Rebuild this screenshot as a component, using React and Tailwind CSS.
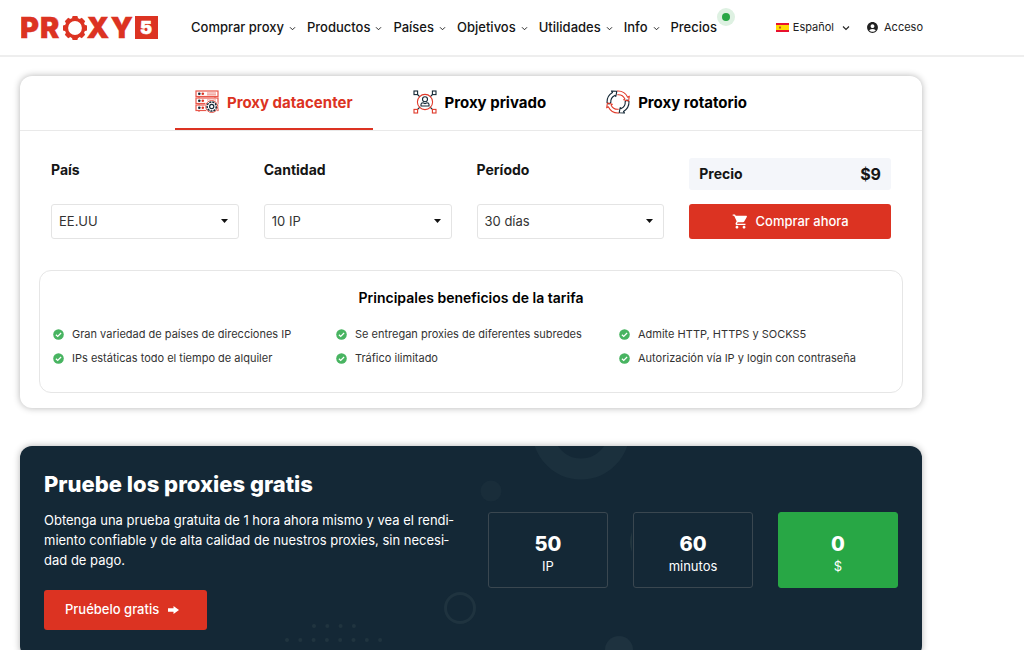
import React from "react";
import { MdAccountCircle, MdShoppingCart } from "react-icons/md";

const NAV = ["Comprar proxy", "Productos", "Países", "Objetivos", "Utilidades", "Info"];

const BENEFITS = [
  "Gran variedad de países de direcciones IP",
  "Se entregan proxies de diferentes subredes",
  "Admite HTTP, HTTPS y SOCKS5",
  "IPs estáticas todo el tiempo de alquiler",
  "Tráfico ilimitado",
  "Autorización vía IP y login con contraseña",
];

const FIELDS = [
  { id: "pais", label: "País", options: ["EE.UU", "Alemania", "Francia"] },
  { id: "cantidad", label: "Cantidad", options: ["10 IP", "50 IP", "100 IP"] },
  { id: "periodo", label: "Período", options: ["30 días", "60 días", "90 días"] },
];

function Logo() {
  const teeth = [0, 45, 90, 135, 180, 225, 270, 315];
  return (
    <svg width="138" height="38" viewBox="0 -6 138 38" role="img" aria-label="Proxy5">
      <g fill="#dc3322" stroke="#dc3322" strokeWidth="0.3" fontFamily="Inter, sans-serif" fontWeight="900" fontSize="29">
        <text x="-1" y="23.3">P</text>
        <text x="19" y="23.3">R</text>
        <text x="65.5" y="23.3">X</text>
        <text x="89.5" y="23.3">Y</text>
      </g>
      <circle cx="54" cy="13" r="8.6" fill="none" stroke="#dc3322" strokeWidth="3.4" />
      {teeth.map((a) => (
        <path key={a} d="M50.8 3.8 L51.6 1 H56.4 L57.2 3.8 Z" fill="#dc3322" transform={`rotate(${a} 54 13)`} />
      ))}
      <rect x="114" y="1" width="23" height="23" fill="#dc3322" />
      <text x="119" y="19" fill="#fff" stroke="#fff" strokeWidth="0.5" fontFamily="Inter, sans-serif" fontWeight="900" fontSize="18">5</text>
    </svg>
  );
}

function Chevron({ className }) {
  return (
    <svg className={className} viewBox="0 0 8 6" fill="none" stroke="currentColor" strokeWidth="1.1" aria-hidden="true">
      <path d="M1 1.5 L4 4.5 L7 1.5" />
    </svg>
  );
}

function SpainFlag() {
  return (
    <svg width="13" height="9" viewBox="0 0 13 9" aria-hidden="true">
      <rect width="13" height="9" fill="#e8112d" />
      <rect y="2" width="13" height="5" fill="#ffd900" />
      <rect x="3" y="3.5" width="2" height="2" fill="#c8501e" />
    </svg>
  );
}

function ServerIcon() {
  return (
    <svg width="24" height="24" viewBox="0 0 24 24" fill="none" aria-hidden="true">
      {[1, 8, 15].map((y) => (
        <g key={y}>
          <rect x="1" y={y} width="22" height="5.5" stroke="#e8564a" strokeWidth="1.2" />
          <circle cx="4.3" cy={y + 2.8} r="1.3" fill="#142836" />
          <circle cx="7.8" cy={y + 2.8} r="1.3" fill="#dc3322" />
          <path d={`M12 ${y + 2} H21 M12 ${y + 3.8} H21`} stroke="#e8564a" strokeWidth="0.7" />
          <path d={`M4 ${y + 5.5} V${y + 7} M20 ${y + 5.5} V${y + 7}`} stroke="#e8564a" />
        </g>
      ))}
      <circle cx="16.7" cy="16.5" r="7" fill="#fff" />
      <circle cx="16.7" cy="16.5" r="6" stroke="#e8564a" strokeWidth="1" />
      <circle cx="16.7" cy="16.5" r="4.6" stroke="#142836" strokeWidth="1.5" strokeDasharray="2.2 0.9" />
      <circle cx="16.7" cy="16.5" r="2.1" stroke="#142836" strokeWidth="1.2" />
    </svg>
  );
}

function PrivateIcon() {
  return (
    <svg width="24" height="24" viewBox="0 0 24 24" fill="none" strokeWidth="1.1" aria-hidden="true">
      <g stroke="#142836">
        <rect x="1" y="1" width="3.6" height="3.6" />
        <rect x="19.4" y="1" width="3.6" height="3.6" />
        <path d="M4.6 4.6 L7 7 M19.4 4.6 L17 7 M4.6 19.4 L7 17 M19.4 19.4 L17 17" />
        <circle cx="12" cy="9.3" r="2.5" />
        <path d="M8 16 V14.4 Q8 12.8 10 12.8 L12 13.7 L14 12.8 Q16 12.8 16 14.4 V16 Z" />
      </g>
      <g stroke="#e03a2a">
        <rect x="1" y="19.4" width="3.6" height="3.6" />
        <rect x="19.4" y="19.4" width="3.6" height="3.6" />
        <circle cx="12" cy="12" r="7.6" />
      </g>
    </svg>
  );
}

function RotateIcon() {
  return (
    <svg width="24" height="24" viewBox="0 0 24 24" fill="none" strokeWidth="1.1" strokeLinejoin="round" aria-hidden="true">
      <g stroke="#142836">
        <path d="M1 12.5 A11 11 0 0 1 6.5 2.6 L5.5 1 L10.8 1.3 L9.8 6.5 L8.8 5.4 A7.2 7.2 0 0 0 4.8 12.5 L3 14 Z" />
        <path d="M23 11.5 A11 11 0 0 1 17.5 21.4 L18.5 23 L13.2 22.7 L14.2 17.5 L15.2 18.6 A7.2 7.2 0 0 0 19.2 11.5 L21 10 Z" />
      </g>
      <g stroke="#e03a2a">
        <path d="M11 1 A11 11 0 0 1 21.7 7.2 L23.3 6.2 L22.6 11 L17.6 9.8 L18.8 8.8 A7.2 7.2 0 0 0 11.3 4.8" />
        <path d="M13 23 A11 11 0 0 1 2.3 16.8 L0.7 17.8 L1.4 13 L6.4 14.2 L5.2 15.2 A7.2 7.2 0 0 0 12.7 19.2" />
      </g>
    </svg>
  );
}

function CheckIcon() {
  return (
    <svg className="h-[11px] w-[11px] shrink-0" viewBox="0 0 11 11" aria-hidden="true">
      <circle cx="5.5" cy="5.5" r="5.3" fill="#48b461" />
      <path d="M2.9 5.7 L4.7 7.4 L8.1 4" fill="none" stroke="#fff" strokeWidth="1.2" />
    </svg>
  );
}

function BannerShapes() {
  return (
    <svg className="pointer-events-none absolute top-0 left-0" width="904" height="212" viewBox="1 0 904 212" aria-hidden="true">
      <circle cx="562" cy="-15" r="38" fill="none" stroke="#1b303d" strokeWidth="21" />
      <circle cx="472" cy="45" r="10.5" fill="#192d3a" />
      <circle cx="441" cy="162" r="14.5" fill="none" stroke="#1f333f" strokeWidth="3" />
      <circle cx="600" cy="204" r="14" fill="#1e323f" />
      <path d="M613 86 Q609 96 613 106 Z" fill="#22363f" />
      <g fill="#20343f">
        {[0, 1, 2, 3].map((i) => <circle key={i} cx={295 + i * 13.3} cy="180" r="2" />)}
        {[0, 1, 2, 3, 4, 5, 6, 7].map((i) => <circle key={i} cx={268 + i * 13.3} cy="194" r="2" />)}
      </g>
    </svg>
  );
}

function Tab({ icon, label, active }) {
  return (
    <button
      type="button"
      role="tab"
      aria-selected={active}
      className={
        "flex h-full items-center gap-2 border-b-2 px-5 text-[15px] font-bold whitespace-nowrap " +
        (active ? "border-[#dc3322] text-[#dc3322]" : "border-transparent text-black")
      }
    >
      {icon}
      <span className="pt-[2px]">{label}</span>
    </button>
  );
}

function Stat({ value, unit, green }) {
  return (
    <div
      className={
        "flex h-[76px] flex-1 flex-col items-center justify-center rounded-[3px] border pt-2 " +
        (green ? "border-[#28a745] bg-[#28a745]" : "border-[#3a4750] bg-[#142836]")
      }
    >
      <strong className="text-xl leading-6 font-extrabold">{value}</strong>
      <span className="text-[13px] leading-5">{unit}</span>
    </div>
  );
}

export default function App() {
  return (
    <div className="bg-white font-['Inter','Liberation_Sans',sans-serif] text-[#151515]">
      <header className="flex h-[57px] items-center border-b-2 border-[#eeeeee] pr-[101px] pl-[21px]">
        <a href="#inicio" className="shrink-0"><Logo /></a>
        <nav className="ml-8 flex items-center gap-[11px] text-[13px] font-medium whitespace-nowrap">
          {NAV.map((item) => (
            <a key={item} href="#menu" className="flex items-center gap-[5px]">
              {item}
              <Chevron className="mt-px h-[5px] w-[7px]" />
            </a>
          ))}
          <a href="#precios" className="relative">
            Precios
            <span className="absolute -top-[10px] -right-[18px] flex size-[18px] items-center justify-center rounded-full bg-[#def1e2]">
              <span className="size-2 rounded-full bg-[#28a745]" />
            </span>
          </a>
        </nav>
        <div className="ml-auto flex items-center gap-4 text-[11px] text-[#222222]">
          <button type="button" className="flex items-center gap-1">
            <SpainFlag />
            Español
            <Chevron className="ml-1 h-[6px] w-2" />
          </button>
          <a href="#acceso" className="flex items-center gap-[5px]">
            <MdAccountCircle className="size-[13px]" />
            Acceso
          </a>
        </div>
      </header>

      <main className="pr-[102px] pb-5 pl-5">
        <section className="mt-[19px] rounded-xl bg-white pb-[15px] shadow-[0_0_7px_rgba(0,0,0,0.3)]">
          <div role="tablist" className="flex h-[55px] justify-center gap-5 border-b border-[#e9e9e9]">
            <Tab icon={<ServerIcon />} label="Proxy datacenter" active />
            <Tab icon={<PrivateIcon />} label="Proxy privado" />
            <Tab icon={<RotateIcon />} label="Proxy rotatorio" />
          </div>

          <form className="grid grid-cols-[188fr_188fr_188fr_202fr] gap-x-[25px] px-[31px] pt-[27px]" onSubmit={(e) => e.preventDefault()}>
            {FIELDS.map((f) => (
              <div key={f.id} className="flex flex-col justify-between">
                <label htmlFor={f.id} className="text-sm leading-6 font-bold">{f.label}</label>
                <div className="relative">
                  <select id={f.id} className="h-[35px] w-full appearance-none rounded-[3px] border border-[#e4e4e4] bg-white px-[7px] text-[13px] text-[#333333]">
                    {f.options.map((o) => <option key={o}>{o}</option>)}
                  </select>
                  <svg className="pointer-events-none absolute top-[15px] right-[11px]" width="7" height="4" viewBox="0 0 7 4" aria-hidden="true">
                    <path d="M0 0 H7 L3.5 4 Z" fill="#111" />
                  </svg>
                </div>
              </div>
            ))}
            <div className="flex flex-col gap-[14px]">
              <div className="flex h-8 items-center justify-between rounded-[3px] bg-[#f4f6fa] px-[10px] font-bold">
                <span className="text-sm">Precio</span>
                <span className="text-base">$9</span>
              </div>
              <button type="submit" className="flex h-[35px] items-center justify-center gap-[7px] rounded-[3px] bg-[#dc3322] text-[13px] font-medium text-white">
                <MdShoppingCart className="size-[17px]" />
                Comprar ahora
              </button>
            </div>
          </form>

          <div className="mx-[19px] mt-[31px] rounded-xl border border-[#e6e6e6] pt-[15px] pb-[22px]">
            <h2 className="text-center text-sm leading-6 font-semibold text-black">Principales beneficios de la tarifa</h2>
            <ul className="mt-3 grid grid-cols-3 pl-[13px] text-[11px] leading-6 text-[#333333]">
              {BENEFITS.map((b) => (
                <li key={b} className="flex items-center gap-2 whitespace-nowrap">
                  <CheckIcon />
                  {b}
                </li>
              ))}
            </ul>
          </div>
        </section>

        <section className="relative mt-[38px] flex items-center overflow-hidden rounded-xl bg-[#142836] px-6 pt-[23px] pb-7 text-white shadow-[0_0_7px_rgba(0,0,0,0.3)]">
          <BannerShapes />
          <div className="relative w-[419px] shrink-0">
            <h2 className="text-[22px] leading-[30px] font-extrabold">Pruebe los proxies gratis</h2>
            <p className="mt-[11px] w-[412px] text-[13px] leading-5">
              Obtenga una prueba gratuita de 1 hora ahora mismo y vea el rendi&shy;miento confiable y de alta calidad de nuestros proxies, sin necesi&shy;dad de pago.
            </p>
            <a href="#prueba" className="mt-5 flex h-10 w-[163px] items-center gap-[9px] rounded-[3px] bg-[#dc3322] pl-[21px] text-[13px] font-medium whitespace-nowrap">
              Pruébelo gratis
              <svg width="11" height="8" viewBox="0 0 11 8" fill="#fff" aria-hidden="true">
                <path d="M0 2.2 H5.5 V0 L11 4 L5.5 8 V5.8 H0 Z" />
              </svg>
            </a>
          </div>
          <div className="relative ml-auto flex w-[410px] gap-[25px]">
            <Stat value="50" unit="IP" />
            <Stat value="60" unit="minutos" />
            <Stat value="0" unit="$" green />
          </div>
        </section>
      </main>
    </div>
  );
}
